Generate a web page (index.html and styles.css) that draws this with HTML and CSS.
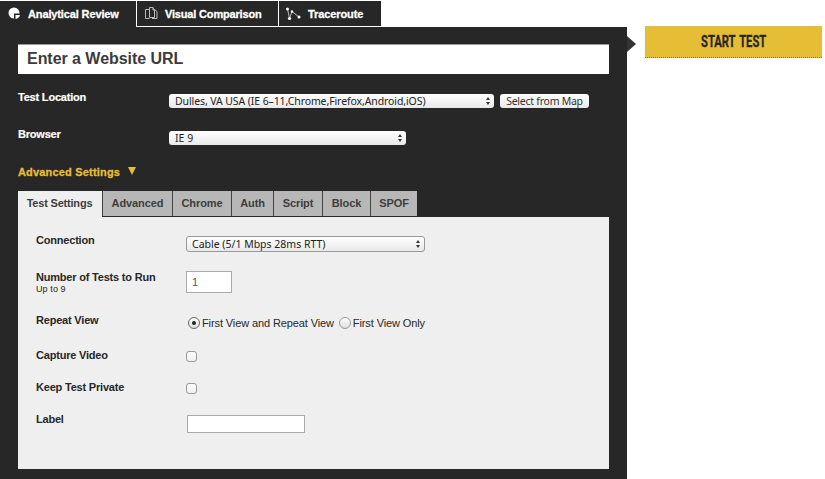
FILE: index.html
```html
<!DOCTYPE html>
<html lang="en">
<head>
<meta charset="utf-8">
<title>Website test</title>
<link rel="stylesheet" href="styles.css">
</head>
<body>
<div class="page">
  <main class="main">
    <nav class="tabs">
      <div class="tab tab-review active">
        <svg width="13" height="13" viewBox="0 0 13 13"><path d="M6 .5A5.500 5.500 0 1 0 6 11.500V6.500H11.500A5.500 5.500 0 0 0 6 .5Z" fill="#fff"/><path d="M7.500 8H12Q11.500 11 7.500 12Z" fill="#fff"/></svg>
        <span>Analytical Review</span>
      </div>
      <div class="tab tab-visual">
        <svg width="13" height="13" viewBox="0 0 13 13" fill="none" stroke="#bbb" stroke-width="1"><path d="M4.500 2.500H.5V11.500H4.500M6 .5H4.500V10.500H9.500V3H8V.5H6M8 .5L9.500 3M9.500 2.500L12 4.500V11.500H7"/></svg>
        <span>Visual Comparison</span>
      </div>
      <div class="tab tab-trace">
        <svg width="15" height="14" viewBox="0 0 15 14"><path d="M1.500 2L3.500 11.500L6 4.500L13 10" fill="none" stroke="#bbb"/><g fill="#fff"><circle cx="1.500" cy="2" r="1.500"/><circle cx="3.500" cy="11.500" r="1.600"/><circle cx="6" cy="4.500" r="1.200"/><circle cx="13" cy="10" r="1.500"/></g></svg>
        <span>Traceroute</span>
      </div>
    </nav>
    <section class="panel">
      <div class="url"><span>Enter a Website URL</span></div>
      <div class="row location">
        <label>Test Location</label>
        <div class="select"><span class="location-text">Dulles, VA USA (IE 6–11,Chrome,Firefox,Android,iOS)</span><i class="arrows"></i></div>
        <button class="map"><span>Select from Map</span></button>
      </div>
      <div class="row browser">
        <label>Browser</label>
        <div class="select"><span>IE 9</span><i class="arrows"></i></div>
      </div>
      <div class="advanced"><span>Advanced Settings</span><i class="triangle"></i></div>
      <div class="subtabs">
        <div class="subtab w-test active"><span>Test Settings</span></div>
        <div class="subtab w-advanced"><span>Advanced</span></div>
        <div class="subtab w-chrome"><span>Chrome</span></div>
        <div class="subtab w-auth"><span>Auth</span></div>
        <div class="subtab w-script"><span>Script</span></div>
        <div class="subtab w-block"><span>Block</span></div>
        <div class="subtab w-spof"><span>SPOF</span></div>
      </div>
      <div class="settings">
        <div class="setting connection"><label>Connection</label><div class="select"><span>Cable (5/1 Mbps 28ms RTT)</span><i class="arrows"></i></div></div>
        <div class="setting count"><label>Number of Tests to Run<small>Up to 9</small></label><div class="number">1</div></div>
        <div class="setting repeat"><label>Repeat View</label><div class="radios"><i class="radio checked"></i><span class="both">First View and Repeat View</span><i class="radio"></i><span class="only">First View Only</span></div></div>
        <div class="setting video"><label>Capture Video</label><i class="check"></i></div>
        <div class="setting private"><label>Keep Test Private</label><i class="check"></i></div>
        <div class="setting name"><label>Label</label><div class="textbox"></div></div>
      </div>
    </section>
  </main>
  <div class="pointer"></div>
  <button class="start"><span>START TEST</span></button>
</div>
</body>
</html>
```

FILE: styles.css
```css
* { box-sizing: border-box; }
body { margin: 0; background: #fff; font: bold 11px/14px "Liberation Sans", Arial, sans-serif; color: #272727; overflow: hidden; }
span, label { white-space: nowrap; }
button { border: 0; margin: 0; padding: 0; }
.page { display: flex; align-items: flex-start; height: 479px; }
.main { width: 627px; height: 479px; display: flex; flex-direction: column; }

.tabs { display: flex; height: 27px; padding-top: 1px; }
.tab { display: flex; align-items: center; height: 25px; background: #272727; color: #fff; letter-spacing: -.17px; -webkit-text-stroke: .3px #fff; }
.tab svg { flex: none; }
.tab-review { width: 136px; height: 26px; padding: 0 0 1px 8px; }
.tab-review span { margin-left: 7px; letter-spacing: -.13px; }
.tab-visual { width: 141px; margin-left: 1px; padding-left: 8px; }
.tab-visual span { margin-left: 7px; }
.tab-trace { width: 102px; margin-left: 1px; padding-left: 7px; }
.tab-trace span { margin-left: 7px; letter-spacing: -.1px; }

.panel { flex: 1; background: #272727; padding: 17px 18px 10px; }
.url { height: 30px; background: #fff; padding: 4px 9px; font-size: 16px; line-height: 19px; letter-spacing: -.04px; color: #3b3b3b; border-top: 1px solid #999; }
.row { display: flex; align-items: flex-start; color: #fff; }
.row label { width: 151px; letter-spacing: -.2px; -webkit-text-stroke: .2px #fff; }
.select { display: flex; align-items: center; justify-content: space-between; height: 14px; padding: 0 4px 0 6px; border-radius: 3px; background: linear-gradient(#fff, #e9e9e9); color: #222; font: 10.500px/14px "Noto Sans", sans-serif; }
.location-text { letter-spacing: -.1px; }
.arrows { display: flex; flex-direction: column; align-items: center; gap: 2px; width: 5px; }
.arrows::before, .arrows::after { content: ""; border: 2px solid transparent; }
.arrows::before { border-top: 0; border-bottom: 3px solid #333; }
.arrows::after { border-bottom: 0; border-top: 3px solid #333; }
.location { margin-top: 16px; height: 37px; }
.location .select { width: 325px; margin-top: 4px; }
.map { width: 89px; height: 14px; margin: 4px 0 0 6px; border-radius: 3px; background: linear-gradient(#fff, #e9e9e9); color: #333; font: 10.500px/14px "Noto Sans", sans-serif; letter-spacing: -.25px; }
.browser { height: 38px; }
.browser .select { width: 237px; margin-top: 4px; }
.advanced { display: flex; height: 26px; color: #e5be35; -webkit-text-stroke: .3px #e5be35; letter-spacing: .18px; }
.triangle { width: 0; height: 0; margin: 2px 0 0 8px; border: 4.500px solid transparent; border-top: 8px solid #e5be35; border-bottom: 0; }

.subtabs { display: flex; height: 26px; color: #3d3d3d; }
.subtab { display: flex; justify-content: center; padding-top: 5px; height: 25px; border-right: 1px solid #444; background: #b7b7b7; letter-spacing: -.1px; }
.subtab.active { height: 26px; background: #efefef; border-right-color: #efefef; letter-spacing: -.2px; }
.w-test { width: 84px; }
.w-advanced { width: 71px; border-left: 1px solid #444; }
.w-chrome { width: 59px; }
.w-auth { width: 42px; }
.w-script { width: 49px; }
.w-block { width: 48px; }
.w-spof { width: 46px; border-right: 0; }

.settings { height: 252px; background: #efefef; padding: 16px 18px 0; }
.setting { display: flex; align-items: flex-start; }
.setting label { width: 150px; letter-spacing: -.2px; }
.connection { height: 37px; }
.connection .select { width: 239px; height: 16px; margin-top: 3px; padding-left: 5px; border: 1px solid #999; }
.count { height: 43px; }
.count small { display: block; font-weight: normal; font-size: 9px; line-height: 11px; letter-spacing: .1px; }
.number { width: 46px; height: 22px; border: 1px solid #aaa; background: #fff; padding: 3px 5px; color: #555; font-size: 11px; font-weight: normal; line-height: 14px; margin-top: 1px; }
.repeat { height: 35px; }
.radios { display: flex; align-items: center; height: 14px; margin: 3px 0 0 2px; font-weight: normal; letter-spacing: -.11px; }
.radio { flex: none; display: flex; align-items: center; justify-content: center; width: 12px; height: 12px; border: 1px solid #999; border-radius: 50%; background: linear-gradient(#fff, #ddd); }
.radio.checked { border-color: #666; }
.radio.checked::after { content: ""; width: 4px; height: 4px; border-radius: 50%; background: #222; }
.both { margin: 0 5px 0 2px; }
.only { margin-left: 2px; }
.video, .private { height: 32px; }
.check { width: 11px; height: 11px; border: 1px solid #999; border-radius: 3px; background: linear-gradient(#fff, #eee); margin-top: 3px; }
.textbox { width: 118px; height: 18px; border: 1px solid #aaa; background: #fff; margin: 3px 0 0 1px; }

.pointer { width: 0; height: 0; margin-top: 36px; border: 8px solid transparent; border-left: 9px solid #333; border-right: 0; }
.start { width: 177px; height: 32px; margin: 26px 0 0 9px; border-bottom: 1px dotted #777; background: #e5be35; color: #272727; font: bold 16px/30px Roboto, sans-serif; }
.start span { display: inline-block; transform: scaleX(.7); word-spacing: 2px; -webkit-text-stroke: .3px #272727; }
```
